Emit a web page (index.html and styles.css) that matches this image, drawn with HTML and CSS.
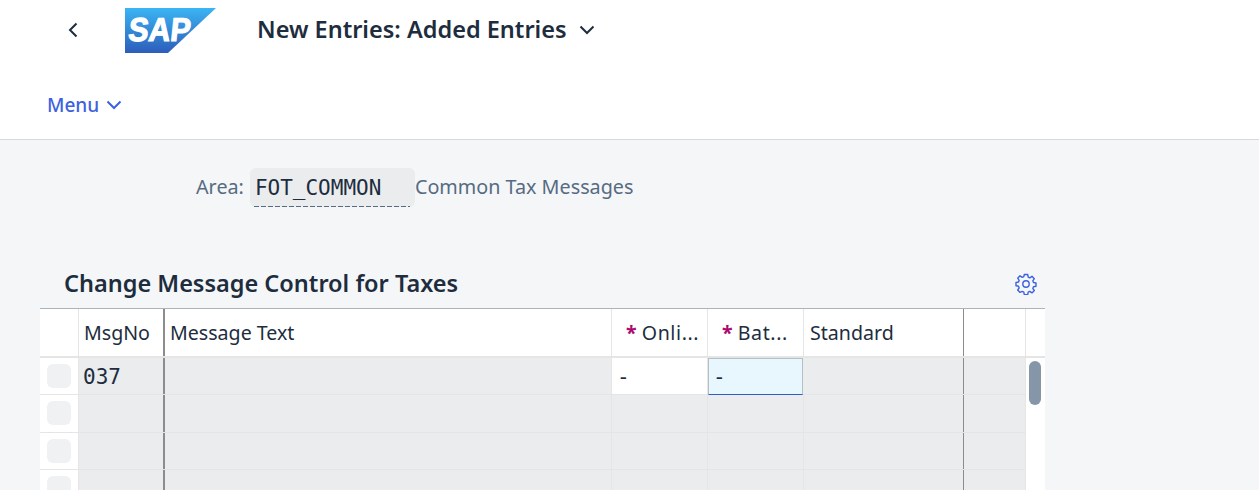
FILE: index.html
```html
<!DOCTYPE html>
<html lang="en">
<head>
    <meta charset="UTF-8">
    <title>New Entries: Added Entries</title>
    <link rel="stylesheet" href="styles.css">
</head>
<body>

<header class="shell">
    <div class="title-row">
        <button class="back-btn" aria-label="Back">
            <svg width="12" height="16" viewBox="0 0 12 16"><path d="M9.5 1.5 3 8l6.5 6.5" fill="none" stroke="#1d2d3e" stroke-width="2"/></svg>
        </button>
        <div class="logo">
            <svg width="91" height="45" viewBox="0 0 91 45">
                <defs>
                    <linearGradient id="sapGrad" x1="0" y1="0" x2="0" y2="1">
                        <stop offset="0" stop-color="#3bb5f3"/>
                        <stop offset="1" stop-color="#2d5dbb"/>
                    </linearGradient>
                </defs>
                <polygon points="0,0 91,0 43,45 0,45" fill="url(#sapGrad)"/>
                <text x="6" y="33" class="logo-text" transform="skewX(-6)" textLength="62" lengthAdjust="spacingAndGlyphs">SAP</text>
            </svg>
        </div>
        <h1 class="page-title">New Entries: Added Entries</h1>
        <svg class="title-caret" width="16" height="10" viewBox="0 0 16 10"><path d="M1.5 1.5 8 8l6.5-6.5" fill="none" stroke="#1d2d3e" stroke-width="2"/></svg>
    </div>
    <div class="menu-row">
        <span class="menu-link">Menu</span>
        <svg width="16" height="10" viewBox="0 0 16 10"><path d="M1.5 1.5 8 8l6.5-6.5" fill="none" stroke="#3c62e0" stroke-width="2"/></svg>
    </div>
</header>

<main class="content">
    <div class="area-row">
        <label class="area-label">Area:</label>
        <div class="area-field"><span>FOT_COMMON</span></div>
        <span class="area-desc">Common Tax Messages</span>
    </div>

    <div class="table-head">
        <h2 class="table-title">Change Message Control for Taxes</h2>
        <svg class="gear" width="22" height="22" viewBox="0 0 22 22" fill="none" stroke="#3c62e0" stroke-width="1.4" stroke-linejoin="round">
            <path d="M9.3 1.5h3.4l.5 2.6 1.6.7 2.2-1.5 2.3 2.4-1.5 2.1.7 1.7 2.5.5v3.2l-2.5.5-.7 1.7 1.5 2.1-2.3 2.4-2.2-1.5-1.6.7-.5 2.6H9.3l-.5-2.6-1.6-.7L5 19.4l-2.3-2.4 1.5-2.1-.7-1.7-2.5-.5V9.5l2.5-.5.7-1.7L2.7 5.2 5 2.8l2.2 1.5 1.6-.7z"/>
            <circle cx="11" cy="11" r="3.2"/>
        </svg>
    </div>

    <div class="table">
        <div class="table-main">
            <div class="row header-row">
                <div class="cell sel-cell"></div>
                <div class="cell key-cell">MsgNo</div>
                <div class="cell">Message Text</div>
                <div class="cell req-cell"><span class="req">*</span> <span class="clip">Onli...</span></div>
                <div class="cell req-cell"><span class="req">*</span> <span class="clip">Bat...</span></div>
                <div class="cell std-cell">Standard</div>
                <div class="cell end-cell"></div>
            </div>
            <div class="row data-row">
                <div class="cell sel-cell"><span class="sel-box"></span></div>
                <div class="cell key-cell mono">037</div>
                <div class="cell"></div>
                <div class="cell open-cell mono">-</div>
                <div class="cell focus-cell mono">-</div>
                <div class="cell std-cell"></div>
                <div class="cell end-cell"></div>
            </div>
            <div class="row data-row tall">
                <div class="cell sel-cell"><span class="sel-box"></span></div>
                <div class="cell key-cell"></div>
                <div class="cell"></div>
                <div class="cell"></div>
                <div class="cell"></div>
                <div class="cell std-cell"></div>
                <div class="cell end-cell"></div>
            </div>
            <div class="row data-row">
                <div class="cell sel-cell"><span class="sel-box"></span></div>
                <div class="cell key-cell"></div>
                <div class="cell"></div>
                <div class="cell"></div>
                <div class="cell"></div>
                <div class="cell std-cell"></div>
                <div class="cell end-cell"></div>
            </div>
            <div class="row data-row">
                <div class="cell sel-cell"><span class="sel-box"></span></div>
                <div class="cell key-cell"></div>
                <div class="cell"></div>
                <div class="cell"></div>
                <div class="cell"></div>
                <div class="cell std-cell"></div>
                <div class="cell end-cell"></div>
            </div>
        </div>
        <div class="scroll-col">
            <div class="scroll-top"></div>
            <div class="scroll-thumb"></div>
        </div>
    </div>
</main>

</body>
</html>
```

FILE: styles.css
```css
html, body {
    height: 490px;
    overflow: hidden;
}
body {
    margin: 0;
    background: #f5f6f8;
    font-family: "Noto Sans", "Open Sans", sans-serif;
    color: #1d2d3e;
}
.shell {
    height: 139px;
    background: white;
    border-bottom: 1px solid #d9d9d9;
}
.title-row {
    display: flex;
    align-items: flex-start;
    height: 60px;
    padding-left: 67px;
}
.back-btn {
    width: 12px;
    height: 16px;
    margin-top: 22px;
    padding: 0;
    border: none;
    background: none;
}
.logo {
    width: 91px;
    height: 45px;
    margin: 8px 0 0 46px;
}
.logo-text {
    font-family: "Liberation Sans", sans-serif;
    font-size: 33px;
    font-weight: bold;
    fill: white;
    stroke: white;
    stroke-width: 1.2px;
}
.page-title {
    margin: 12px 0 0 41px;
    font-size: 23.5px;
    line-height: 34px;
    font-weight: 600;
}
.title-caret {
    margin: 25px 0 0 12px;
}
.menu-row {
    display: flex;
    align-items: center;
    gap: 7px;
    padding: 32px 0 0 47px;
    color: #3c62e0;
}
.menu-link {
    font-size: 19px;
    line-height: 26px;
    font-weight: 500;
}
.content {
    padding: 0 214px 0 40px;
}
.area-row {
    display: flex;
    align-items: flex-start;
    height: 120px;
    padding: 28px 0 0 156px;
    box-sizing: border-box;
    font-size: 19.75px;
    color: #556b82;
}
.area-label {
    margin-right: 6px;
    line-height: 38px;
}
.area-field {
    width: 165px;
    height: 39px;
    padding: 0 5px;
    box-sizing: border-box;
    background: #eaecee;
    border-radius: 6px;
    font-family: "DejaVu Sans Mono", monospace;
    font-size: 21px;
    line-height: 41px;
    color: #1d2d3e;
    position: relative;
}
.area-field::after {
    content: "";
    position: absolute;
    left: 4px;
    right: 5px;
    bottom: 0;
    height: 1px;
    background: repeating-linear-gradient(to right, #556b82 0 5px, transparent 5px 7px);
}
.area-desc {
    line-height: 38px;
}
.table-head {
    display: flex;
    align-items: center;
    justify-content: space-between;
    height: 48px;
    padding: 0 8px 0 24px;
}
.table-title {
    margin: 0 0 2px;
    font-size: 23.5px;
    line-height: 32px;
    font-weight: 600;
}
.table {
    display: flex;
    width: 1005px;
    height: 182px;
    border-top: 1px solid #a9b4be;
    background: white;
}
.table-main {
    width: 985px;
}
.row {
    display: grid;
    grid-template-columns: 39px 86px 447px 96px 96px 160px 61px;
    box-sizing: border-box;
    border-bottom: 1px solid #e5e5e5;
}
.header-row {
    height: 49px;
    background: white;
    font-size: 19.6px;
    line-height: 48px;
    border-bottom-width: 2px;
}
.data-row {
    height: 37px;
    background: #eaecee;
}
.data-row.tall {
    height: 38px;
}
.cell {
    box-sizing: border-box;
    padding: 0 6px;
    border-right: 1px solid #e5e5e5;
    white-space: nowrap;
    overflow: hidden;
}
.header-row .cell {
    padding: 0 0 0 5px;
}
.sel-cell {
    background: white;
    padding: 6px 0 0 7px;
}
.sel-box {
    display: block;
    width: 24px;
    height: 24px;
    background: #eff1f2;
    border-radius: 6px;
}
.key-cell {
    border-right: 2px solid #8c8c8c;
}
.std-cell,
.row.header-row .std-cell {
    border-right: 1px solid #8c8c8c;
    padding-left: 6px;
}
.end-cell {
    border-right: none;
}
.row.header-row .req-cell {
    padding-left: 14px;
}
.req {
    color: #aa0a6e;
    font-weight: bold;
}
.clip {
    letter-spacing: 0.6px;
}
.mono {
    font-family: "DejaVu Sans Mono", monospace;
    font-size: 21px;
    line-height: 38px;
    padding-left: 4px;
}
.open-cell {
    background: white;
    padding-left: 5px;
}
.focus-cell {
    margin: 0 1px -1px 0;
    background: #e8f6fd;
    border: 1px solid #b4c0c6;
    border-bottom: 1px solid #2d5fc4;
    padding-left: 4px;
    line-height: 37px;
}
.scroll-col {
    width: 20px;
    box-sizing: border-box;
    border-left: 1px solid #e5e5e5;
}
.scroll-top {
    height: 49px;
    border-bottom: 2px solid #e5e5e5;
    box-sizing: border-box;
}
.scroll-thumb {
    width: 12px;
    height: 44px;
    margin: 3px 0 0 3px;
    background: #8696a9;
    border-radius: 6px;
}
```
